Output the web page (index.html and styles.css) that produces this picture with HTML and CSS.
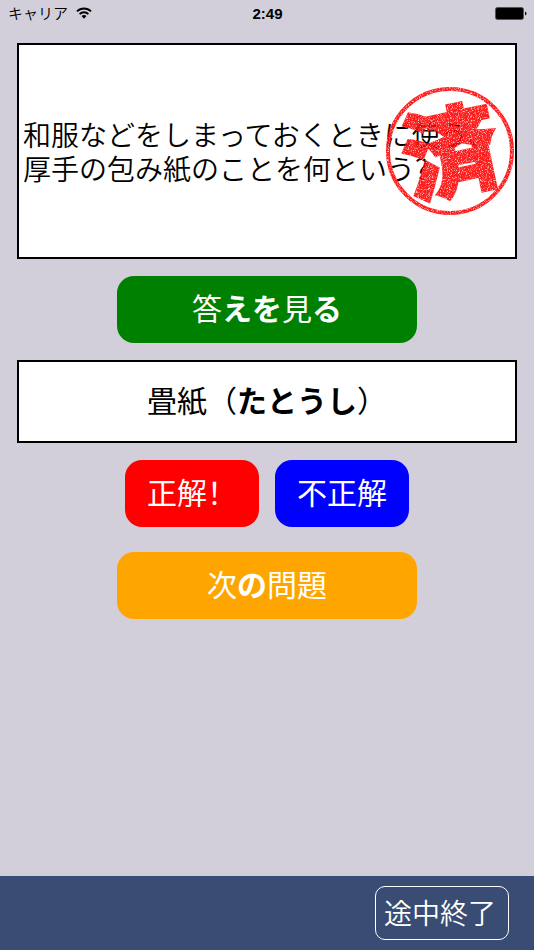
FILE: index.html
```
<!DOCTYPE html>
<html lang="ja">
<head>
    <meta charset="UTF-8">
    <meta name="viewport" content="width=device-width, initial-scale=1.0">
    <title>クイズ</title>
    <link rel="stylesheet" href="styles.css">
</head>
<body>
<header class="status-bar">
    <div class="carrier">
        <span>キャリア</span>
        <svg class="wifi" viewBox="0 0 16 12" aria-hidden="true">
            <path d="M1 4.4a10 10 0 0 1 14 0M3.6 7.1a6.3 6.3 0 0 1 8.8 0" fill="none" stroke="#000" stroke-width="1.9"/>
            <path d="M5.5 9.1a3.6 3.6 0 0 1 5 0L8 11.8z"/>
        </svg>
    </div>
    <time class="clock">2:49</time>
    <svg class="battery" viewBox="0 0 32 13" aria-hidden="true">
        <rect x="0.5" y="0.5" width="28" height="12" rx="2" stroke="#555"/>
        <path d="M30 4.5q1.5.4 1.5 2t-1.5 2z"/>
    </svg>
</header>

<main class="quiz">
    <section class="box question">
        <p>和服などをしまっておくときに使う、<br>厚手の包み紙のことを何という?</p>
        <svg class="stamp" viewBox="0 0 130 130" role="img" aria-label="済">
            <defs>
                <filter id="grain" x="0" y="0" width="130" height="130" filterUnits="userSpaceOnUse" color-interpolation-filters="sRGB">
                    <feTurbulence type="fractalNoise" baseFrequency="0.9" numOctaves="2" seed="4" result="noise"/>
                    <feColorMatrix in="noise" type="matrix" values="0 0 0 0 1  0 0 0 0 0.7  0 0 0 0 0.7  4 0 0 0 -2"  result="dots"/>
                    <feComposite in="dots" in2="SourceGraphic" operator="in" result="specks"/>
                    <feMerge>
                        <feMergeNode in="SourceGraphic"/>
                        <feMergeNode in="specks"/>
                    </feMerge>
                </filter>
            </defs>
            <g filter="url(#grain)">
                <circle cx="65" cy="65" r="62" fill="none" stroke="#f00" stroke-width="4"/>
                <text class="stamp-text" x="65" y="102" text-anchor="middle" transform="rotate(-12 65 65)">済</text>
            </g>
        </svg>
    </section>

    <button type="button" class="btn btn-wide btn-show">答<b>えを</b>見<b>る</b></button>

    <section class="box answer" id="answer">
        <p>畳紙（<b>たとうし</b>）</p>
    </section>

    <div class="judge">
        <button type="button" class="btn btn-correct">正解<span class="mark" lang="zh-Hans">！</span></button>
        <button type="button" class="btn btn-wrong">不正解</button>
    </div>

    <button type="button" class="btn btn-wide btn-next">次<b>の</b>問題</button>
</main>

<footer class="toolbar">
    <button type="button" class="btn-quit">途中終了</button>
</footer>

<script>
    // 答えの表示・非表示を切り替える
    document.querySelector('.btn-show').addEventListener('click', function() {
        document.getElementById('answer').classList.toggle('hidden');
    });
</script>
</body>
</html>
```

FILE: styles.css
```
* {
    box-sizing: border-box;
}

body {
    display: flex;
    flex-direction: column;
    min-height: 100vh;
    margin: 0;
    background-color: #d2cfda;
    color: #000;
    font-family: 'Noto Sans CJK JP', sans-serif;
}

p {
    margin: 0;
}

/* ステータスバー */
.status-bar {
    display: grid;
    grid-template-columns: 1fr auto 1fr;
    align-items: center;
    height: 27px;
    padding: 0 7px 0 8px;
}

.carrier {
    display: flex;
    align-items: center;
    gap: 8px;
    padding-bottom: 2px;
    font-size: 15px;
    font-weight: 350;
    line-height: 24px;
}

.wifi {
    width: 16px;
    height: 12px;
}

.clock {
    font-family: 'Liberation Sans', Arial, sans-serif;
    font-size: 15px;
    font-weight: bold;
}

.battery {
    justify-self: end;
    width: 32px;
    height: 13px;
}

/* 問題と解答 */
.quiz {
    flex: 1;
    display: flex;
    flex-direction: column;
    align-items: center;
    gap: 17px;
    padding: 16px 17px;
}

.box {
    display: flex;
    align-items: center;
    width: 100%;
    background-color: #fff;
    border: 2px solid #000;
}

.question {
    position: relative;
    min-height: 216px;
    padding: 0 4px;
    font-size: 28px;
    font-weight: 350;
    line-height: 34px;
}

.stamp {
    position: absolute;
    top: 41px;
    right: 0;
    width: 130px;
    height: 130px;
    opacity: 0.88;
}

.stamp-text {
    font-size: 96px;
    font-weight: 900;
    fill: #f00;
    stroke: #f00;
    stroke-width: 3px;
}

.answer {
    justify-content: center;
    min-height: 83px;
    padding-bottom: 6px;
    font-size: 30px;
    line-height: 40px;
}

.answer.hidden {
    visibility: hidden;
}

/* ボタン */
.btn {
    width: 134px;
    height: 67px;
    padding: 0 0 6px;
    border: none;
    border-radius: 17px;
    color: #fff;
    font-family: inherit;
    font-size: 30px;
    line-height: 40px;
    cursor: pointer;
}

.btn-wide {
    width: 300px;
    max-width: 100%;
}

.btn-show {
    background-color: #008000;
}

.btn-correct {
    background-color: #f00;
}

.btn-wrong {
    background-color: #00f;
}

.mark {
    font-family: 'Noto Sans CJK SC', sans-serif;
}

.btn-next {
    background-color: #ffa500;
}

.judge {
    display: flex;
    gap: 16px;
    margin-bottom: 8px;
}

/* 下部バー */
.toolbar {
    display: flex;
    justify-content: flex-end;
    padding: 10px 25px;
    background-color: #384c74;
}

.btn-quit {
    width: 134px;
    height: 54px;
    padding: 0 4px 3px 0;
    background: none;
    border: 1px solid #fff;
    border-radius: 10px;
    color: #fff;
    font-family: inherit;
    font-size: 28px;
    font-weight: 350;
    line-height: 36px;
    cursor: pointer;
}
```
